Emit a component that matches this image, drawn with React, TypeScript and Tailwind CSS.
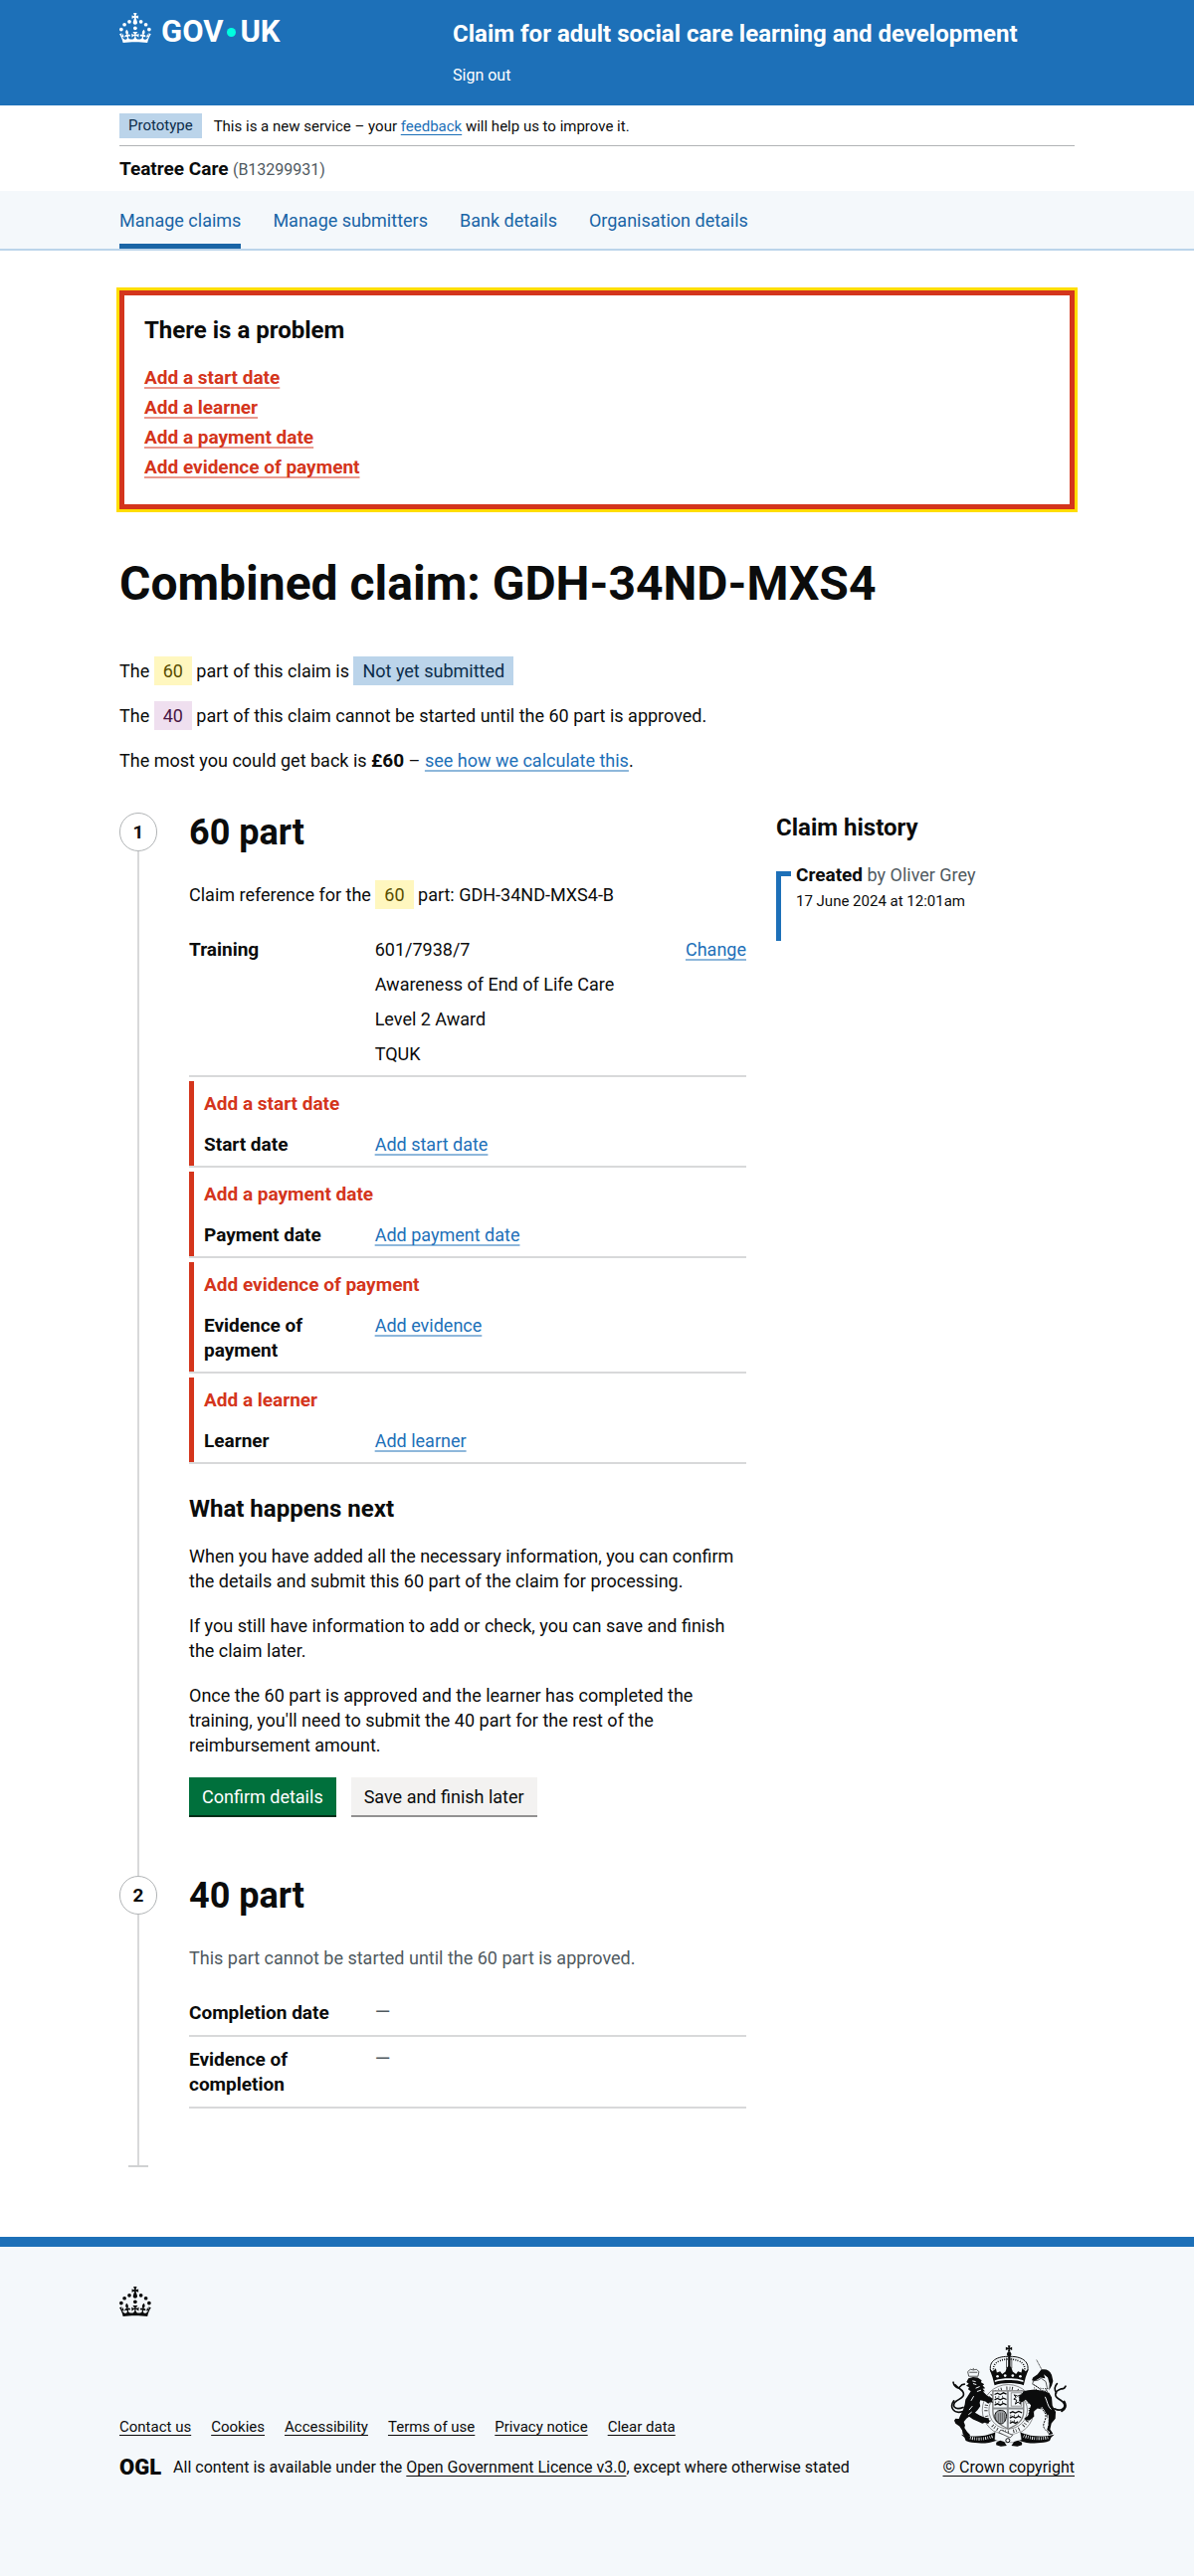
import React from "react";

const BOLD = "text-[19px] font-bold";
const INLINE_BOLD = "text-[19px] leading-none font-bold";
const LINK =
  "text-[#1d70b8] underline decoration-2 decoration-[#8eb7db] underline-offset-[3px] [text-decoration-skip-ink:none]";

function Crown() {
  return (
    <svg viewBox="0 0 64 60" className="h-[30px] w-8 shrink-0" fill="currentColor" aria-hidden="true">
      <circle cx="20" cy="17.6" r="3.7" />
      <circle cx="10.2" cy="23.5" r="3.7" />
      <circle cx="3.7" cy="33.2" r="3.7" />
      <circle cx="31.7" cy="30.6" r="3.7" />
      <circle cx="43.3" cy="17.6" r="3.7" />
      <circle cx="53.2" cy="23.5" r="3.7" />
      <circle cx="59.7" cy="33.2" r="3.7" />
      <path d="M33.1,9.8c.2-.1.3-.3.5-.5l4.6,2.4v-6.8l-4.6,1.5c-.1-.2-.3-.3-.5-.5l1.9-5.9h-6.7l1.9,5.9c-.2.1-.3.3-.5.5l-4.6-1.5v6.8l4.6-2.4c.1.2.3.3.5.5l-2.6,8c-.9,2.8,1.2,5.7,4.1,5.7h0c3,0,5.1-2.9,4.1-5.7l-2.6-8ZM37,37.9s-3.4,3.8-4.1,6.1c2.2,0,4.2-.5,6.4-2.8l-.7,8.5c-2-2.8-4.4-4.1-5.7-3.8.1,3.1.5,6.7,5.8,7.2,3.7.3,6.7-1.5,7-3.8.4-2.6-2-4.3-3.7-1.6-1.4-4.5,2.4-6.1,4.9-3.2-1.9-4.5-1.8-7.7,2.4-10.9,3,4,2.6,7.3-1.2,11.1,2.4-1.3,6.2,0,4,4.6-1.2-2.8-3.7-2.2-4.2.2-.3,1.7.7,3.7,3,4.2,1.9.3,4.7-.9,7-5.9-1.3,0-2.4.7-3.9,1.7l2.4-8c.6,2.3,1.4,3.7,2.2,4.5.6-1.6.5-2.8,0-5.3l5,1.8c-2.6,3.6-5.2,8.7-7.3,17.5-7.4-1.1-15.7-1.7-24.5-1.7h0c-8.8,0-17.1.6-24.5,1.7-2.1-8.9-4.7-13.9-7.3-17.5l5-1.8c-.5,2.5-.6,3.7,0,5.3.8-.8,1.6-2.3,2.2-4.5l2.4,8c-1.5-1-2.6-1.7-3.9-1.7,2.3,5,5.2,6.2,7,5.9,2.3-.4,3.3-2.4,3-4.2-.5-2.4-3-3.1-4.2-.2-2.2-4.6,1.6-6,4-4.6-3.7-3.7-4.2-7.1-1.2-11.1,4.2,3.2,4.3,6.4,2.4,10.9,2.5-2.8,6.3-1.3,4.9,3.2-1.8-2.7-4.1-1-3.7,1.6.3,2.3,3.3,4.1,7,3.8,5.4-.5,5.7-4.2,5.8-7.2-1.3-.2-3.7,1-5.7,3.8l-.7-8.5c2.2,2.3,4.2,2.7,6.4,2.8-.7-2.3-4.1-6.1-4.1-6.1h10.6,0Z" />
    </svg>
  );
}

function RoyalArms() {
  return (
    <svg viewBox="80 52 350 307" className="h-[102px] w-[117px]" aria-hidden="true" fill="#0b0c0c">
      {/* cross, orb and crown */}
      <path d="M253 53h8l-2 7 7-3v10l-7-3 2 8h-8l2-8-8 3V57l8 3z" />
      <circle cx="257" cy="79" r="7" />
      <path d="M254 84h7v34h-7z" />
      <g fill="none" stroke="#0b0c0c">
        <path d="M202 132c-8-26 10-46 52-46M312 132c8-26-10-46-52-46" strokeWidth="3" />
        <path d="M211 132c-6-20 8-36 42-38M303 132c6-20-8-36-42-38" strokeWidth="5" strokeDasharray="3 4" />
        <path d="M249 90v32M265 90v32" strokeWidth="2" />
      </g>
      <path d="M198 124l10 7 9-9 3 13 10-4 6 8 10-7 4-12 7-7 7 7 4 12 10 7 6-8 10 4 3-13 9 9 10-7-9 25-6 24c-22-9-66-9-88 0l-6-24z" />
      <g fill="#f4f8fb">
        <circle cx="222" cy="146" r="4" />
        <circle cx="245" cy="144" r="4" />
        <circle cx="268" cy="144" r="4" />
        <circle cx="291" cy="146" r="4" />
        <path d="M214 158c25-8 61-8 86 0v5c-25-8-61-8-86 0z" />
      </g>
      {/* garter */}
      <ellipse cx="254" cy="248" rx="78" ry="77" fill="#f4f8fb" stroke="#555" strokeWidth="2" />
      <ellipse cx="254" cy="248" rx="67" ry="66" fill="none" stroke="#333" strokeWidth="10" strokeDasharray="3 7 2 5 3 14" />
      <ellipse cx="254" cy="248" rx="58" ry="57" fill="#f4f8fb" stroke="#555" strokeWidth="2" />
      {/* quartered shield */}
      <path d="M208 190h93v62c0 30-22 42-46 53-24-11-47-23-47-53z" fill="#f4f8fb" stroke="#777" strokeWidth="4" />
      <path d="M253 190v112M208 243h93" stroke="#8a8d90" strokeWidth="6" />
      <g fill="none" stroke="#0b0c0c" strokeWidth="4">
        <path d="M213 201l9-4 8 4 10-5 9 4M213 217l9-4 8 4 10-5 9 4M213 233l9-4 8 4 10-5 9 4" />
        <path d="M216 206v6M226 205v6M237 205v6M216 222v6M226 221v6M237 221v6" strokeWidth="2" />
        <path d="M259 257l9-4 8 4 10-5 10 4M259 272l9-4 8 4 10-5 7 4M259 288l9-4 8 4 8-5" />
        <path d="M262 262v6M273 262v6M285 262v6M262 278v6M273 278v6" strokeWidth="2" />
        <path d="M272 202l6 8-7 5 9 3-4 12 8-6 8 6-3-12 6-4-8-3 5-9-9 4z" strokeWidth="3" />
        <rect x="263" y="196" width="32" height="40" strokeWidth="2" stroke="#666" />
      </g>
      <path d="M217 256c4-8 20-10 28-2l4 8c0 16-6 26-16 28-12-2-20-14-19-27z" fill="#9a9da0" stroke="#0b0c0c" strokeWidth="3" />
      <path d="M225 258v26M231 256v30M237 256v30M243 258v26" stroke="#0b0c0c" strokeWidth="1" />
      {/* lion */}
      <g fill="none" stroke="#0b0c0c" strokeWidth="2">
        <path d="M135 146l-3-14 8-7 9 2 9-2 8 7-3 14zM149 126v-5M137 134h24" />
      </g>
      <path d="M134 152l14-4 14 2 12 8-2 6 10 6-5 4 8 8-8 2 7 7-6 1 12 12 10 6 8 4-3 6 4 6-9-2-6 5-10-8-14-3-2 8 2 10-8 12-8 8 14 8 14 6 12 3 4 8-4 9-10-4-8 3-14-7-14-6-12-8-8 6-8 10 4 10-2 8 8 12 8 8 1 4-16 1-6-6-2-12-8-12-12-8-4-9 4-6 10 1 4-10 8-14 6-20 2-14 10-16 6-10-8-6 3-6-9-4 8-6-7-6z" />
      <path d="M146 160l10 2M148 168l10 3M156 182l12-5M160 192l12-4M134 262l10-8M128 298l6 8M150 206l-8 14M146 236l-10 12" stroke="#f4f8fb" strokeWidth="3" fill="none" />
      <path d="M118 240c-26 10-36-6-22-18 14-10 28-14 22-28-4-10-16-12-24-22M118 252c-30 10-42-14-28-32M104 182c-8-2-14-8-16-18M108 178c4-6 10-8 14-8" fill="none" stroke="#0b0c0c" strokeWidth="5" strokeLinecap="round" />
      {/* unicorn */}
      <path d="M340 96l18 34" stroke="#0b0c0c" strokeWidth="2" strokeDasharray="4 1" />
      <path d="M354 126c14-4 27 2 32 16l4 18-4 14-8 14 1-20-5-18-12-10 4 12-14-2-18 10-8-2 3-8 14-10z" />
      <path d="M330 160l14-2 10-6 14 10 4 18-4 12-14-4-14-12-12-6z" fill="#f4f8fb" stroke="#0b0c0c" strokeWidth="2" />
      <path d="M333 172c10 10 26 14 46 10M332 180c12 12 28 14 46 10" stroke="#0b0c0c" strokeWidth="3" strokeDasharray="3 4" fill="none" />
      <path d="M314 188l20-2 22 4 22 6 8 14 2 24 10 20-1 20-12 14-4 18 9 14-12 3-8-10 4-14 1-18-4-18-12-16-16-4-12 10 2 14-14 12-12 0-4-6 12-8 4-18 4-14-16-16-12 8-8-6 2-12 12-16z" />
      <path d="M354 240c6 12 16 16 14 30s-12 22-4 34 12 8 14 14" fill="none" stroke="#f4f8fb" strokeWidth="6" />
      <path d="M354 240c6 12 16 16 14 30s-12 22-4 34 12 8 14 14" fill="none" stroke="#0b0c0c" strokeWidth="3" strokeDasharray="6 3" />
      <path d="M366 208c6 12 8 30 18 38M374 262c4 12-2 22 0 34" fill="none" stroke="#f4f8fb" strokeWidth="3" />
      <path d="M394 244c24 12 38-6 26-20-12-12-26-12-22-28 4-10 16-12 26-14M400 196c-8-10-4-22 2-28M424 222c8 12 4 24-8 30M414 184c8 2 12-4 14-8" fill="none" stroke="#0b0c0c" strokeWidth="5" strokeLinecap="round" />
      {/* scroll */}
      <path d="M112 322c34 8 66 8 104-7l4 25c-30 12-60 9-84 5l-10-4-4-10z" />
      <path d="M394 322c-34 8-66 8-104-7l-4 25c30 12 60 9 84 5l10-4 4-10z" />
      <path d="M139 332c24 6 46 4 70-5M301 326c24 9 46 11 76 5" fill="none" stroke="#f4f8fb" strokeWidth="9" strokeDasharray="2 4 3 4 2 5" />
      <path d="M215 312c20 14 56 14 76 0l4 26-22 8h-40l-20-8z" fill="#f4f8fb" stroke="#0b0c0c" strokeWidth="1" />
      <path d="M232 308l36 16-8 8-34-16z" fill="#f4f8fb" stroke="#0b0c0c" strokeWidth="2" />
      <path d="M218 346l12-6 12 4 8 12-18 2-14-4zM296 346l-12-6-12 4-8 12 18 2 14-4z" />
      <circle cx="253" cy="340" r="6" fill="#f4f8fb" stroke="#0b0c0c" strokeWidth="3" />
    </svg>
  );
}

function Tag({ tone, children }: { tone: "yellow" | "purple" | "blue"; children: React.ReactNode }) {
  const tones = {
    yellow: "bg-[#fff7bf] text-[#594d00]",
    purple: "bg-[#efdfef] text-[#491644]",
    blue: "bg-[#bbd4ea] text-[#0c2d4a]",
  };
  return <strong className={`px-[9px] py-1 font-normal ${tones[tone]}`}>{children}</strong>;
}

const NAV = ["Manage claims", "Manage submitters", "Bank details", "Organisation details"];
const ERRORS = ["Add a start date", "Add a learner", "Add a payment date", "Add evidence of payment"];
const MISSING = [
  { error: "Add a start date", label: "Start date", action: "Add start date" },
  { error: "Add a payment date", label: "Payment date", action: "Add payment date" },
  { error: "Add evidence of payment", label: "Evidence of payment", action: "Add evidence" },
  { error: "Add a learner", label: "Learner", action: "Add learner" },
];
const FOOTER_LINKS = ["Contact us", "Cookies", "Accessibility", "Terms of use", "Privacy notice", "Clear data"];
const FOOT_LINK = "underline decoration-1 underline-offset-[3px] [text-decoration-skip-ink:none]";

function Step({ number, last, children }: { number: number; last?: boolean; children: React.ReactNode }) {
  return (
    <li className="flex">
      <div className="mr-8 flex w-[38px] shrink-0 flex-col items-center">
        <span
          className={`flex h-[39px] w-[38px] shrink-0 items-center justify-center rounded-full border border-[#b1b4b6] ${BOLD}`}
        >
          {number}
        </span>
        <span className="w-0.5 grow bg-[#d8d9da]" />
        {last && <span className="h-0.5 w-5 bg-[#d0d2d3]" />}
      </div>
      <div className="min-w-0 grow pb-[59px]">{children}</div>
    </li>
  );
}

export default function App() {
  return (
    <div className="bg-white font-['Roboto','Liberation_Sans',sans-serif] text-[18px] leading-[25px] text-[#0b0c0c]">
      <header>
        <div className="bg-[#1d70b8] px-4 pb-5 text-white">
          <div className="mx-auto flex max-w-[960px] flex-wrap">
            <a href="#home" aria-label="GOV.UK" className="flex w-[335px] items-start pt-[13px]">
              <Crown />
              <span className="mt-1 ml-2.5 flex items-center text-[31px] leading-[30px] font-bold">
                GOV
                <span className="mx-1 size-[9px] rounded-full bg-[#00ffe0]" />
                UK
              </span>
            </a>
            <div className="pt-[19px]">
              <a href="#service" className="block text-2xl leading-[30px] font-bold">
                Claim for adult social care learning and development
              </a>
              <a href="#sign-out" className="mt-[17px] block text-base leading-5">
                Sign out
              </a>
            </div>
          </div>
        </div>
        <div className="px-4">
          <div className="mx-auto max-w-[960px]">
            <div className="flex items-center border-b border-[#b1b4b6] pt-2 pb-[7px] text-[15px] leading-5">
              <strong className="bg-[#bbd4ea] px-[9px] pt-0.5 pb-[3px] font-normal text-[#0c2d4a]">Prototype</strong>
              <span className="ml-3">
                This is a new service – your{" "}
                <a
                  href="#feedback"
                  className="text-[#1d70b8] underline decoration-1 underline-offset-[3px] [text-decoration-skip-ink:none]"
                >
                  feedback
                </a>{" "}
                will help us to improve it.
              </span>
            </div>
            <p className="py-2.5">
              <span className={INLINE_BOLD}>Teatree Care</span>{" "}
              <span className="text-base leading-5 text-[#505a5f]">(B13299931)</span>
            </p>
          </div>
        </div>
        <nav aria-label="Account" className="border-b-2 border-[#bbd4ea] bg-[#f4f8fb] px-4">
          <ul className="mx-auto flex max-w-[960px] flex-wrap gap-x-8">
            {NAV.map((item, i) => (
              <li key={item}>
                <a
                  href="#nav"
                  aria-current={i === 0 ? "page" : undefined}
                  className={
                    "block border-b-[5px] pt-[17px] pb-[11px] text-[#1a65a6] " +
                    (i === 0 ? "border-[#1a65a6]" : "border-transparent")
                  }
                >
                  {item}
                </a>
              </li>
            ))}
          </ul>
        </nav>
      </header>

      <main className="px-4 pt-10 pb-[70px]">
        <div className="mx-auto max-w-[960px]">
          <section role="alert" className="border-[5px] border-[#d4351c] p-5 outline-3 outline-[#ffdd00]">
            <h2 className="mb-5 text-2xl leading-[30px] font-bold">There is a problem</h2>
            <ul>
              {ERRORS.map((error) => (
                <li key={error} className={`mb-[5px] ${BOLD}`}>
                  <a
                    href="#details"
                    className="text-[#d4351c] underline decoration-[#ea9a8e] decoration-2 underline-offset-[3px] [text-decoration-skip-ink:none]"
                  >
                    {error}
                  </a>
                </li>
              ))}
            </ul>
          </section>

          <h1 className="my-[50px] text-5xl leading-[50px] font-bold">Combined claim: GDH-34ND-MXS4</h1>

          <div className="space-y-5">
            <p>
              The <Tag tone="yellow">60</Tag> part of this claim is <Tag tone="blue">Not yet submitted</Tag>
            </p>
            <p>
              The <Tag tone="purple">40</Tag> part of this claim cannot be started until the 60 part is approved.
            </p>
            <p>
              The most you could get back is <strong className={INLINE_BOLD}>£60</strong> –{" "}
              <a href="#calculation" className={LINK}>
                see how we calculate this
              </a>
              .
            </p>
          </div>

          <div className="mt-10 grid gap-[30px] md:grid-cols-3">
            <ol className="md:col-span-2">
              <Step number={1}>
                <h2 className="mb-[30px] text-4xl leading-10 font-bold">60 part</h2>
                <p className="mb-5">
                  Claim reference for the <Tag tone="yellow">60</Tag> part: GDH-34ND-MXS4-B
                </p>
                <dl id="details">
                  <div className="mb-1 flex border-b-2 border-[#d8d9da] pt-2.5 pb-[9px]">
                    <dt className={`w-1/3 shrink-0 ${BOLD}`}>Training</dt>
                    <dd className="grow space-y-2.5">
                      <p>601/7938/7</p>
                      <p>Awareness of End of Life Care</p>
                      <p>Level 2 Award</p>
                      <p>TQUK</p>
                    </dd>
                    <dd>
                      <a href="#training" className={LINK}>
                        Change
                      </a>
                    </dd>
                  </div>
                  {MISSING.map((row) => (
                    <div key={row.label} className="mb-1 border-b-2 border-[#d8d9da] last:mb-0">
                      <div className="border-l-[5px] border-[#d4351c] pt-2.5 pb-[9px]">
                        <p className={`mb-4 pl-2.5 text-[#d4351c] ${BOLD}`}>{row.error}</p>
                        <div className="-ml-[5px] flex">
                          <dt className={`w-1/3 shrink-0 pr-10 pl-[15px] ${BOLD}`}>{row.label}</dt>
                          <dd>
                            <a href="#add" className={LINK}>
                              {row.action}
                            </a>
                          </dd>
                        </div>
                      </div>
                    </div>
                  ))}
                </dl>
                <h3 className="mt-[30px] mb-5 text-2xl leading-[30px] font-bold">What happens next</h3>
                <div className="space-y-5">
                  <p>
                    When you have added all the necessary information, you can confirm the details and submit this 60
                    part of the claim for processing.
                  </p>
                  <p>If you still have information to add or check, you can save and finish the claim later.</p>
                  <p>
                    Once the 60 part is approved and the learner has completed the training, you'll need to submit the
                    40 part for the rest of the reimbursement amount.
                  </p>
                </div>
                <div className="mt-5 flex flex-wrap gap-[15px]">
                  <button type="button" className="h-10 border-b-2 border-[#002d18] bg-[#00703c] px-[13px] text-white">
                    Confirm details
                  </button>
                  <button type="button" className="h-10 border-b-2 border-[#929191] bg-[#f3f2f1] px-[13px]">
                    Save and finish later
                  </button>
                </div>
              </Step>
              <Step number={2} last>
                <h2 className="mb-[30px] text-4xl leading-10 font-bold">40 part</h2>
                <p className="mb-5 text-[#505a5f]">This part cannot be started until the 60 part is approved.</p>
                <dl>
                  {["Completion date", "Evidence of completion"].map((label) => (
                    <div key={label} className="flex border-b-2 border-[#d8d9da] py-2.5">
                      <dt className={`w-1/3 shrink-0 pr-10 ${BOLD}`}>{label}</dt>
                      <dd className="text-xl leading-[25px] text-[#505a5f]">—</dd>
                    </div>
                  ))}
                </dl>
              </Step>
            </ol>

            <aside>
              <h2 className="mb-5 text-2xl leading-[30px] font-bold">Claim history</h2>
              <div className="flex">
                <span className="mt-[9px] mr-[5px] h-[70px] w-[15px] border-t-[5px] border-l-[5px] border-[#1d70b8]" />
                <div>
                  <p>
                    <strong className={INLINE_BOLD}>Created</strong>{" "}
                    <span className="text-[#505a5f]">by Oliver Grey</span>
                  </p>
                  <p className="mt-1 text-[15px] leading-5">
                    <time dateTime="2024-06-17T00:01">17 June 2024 at 12:01am</time>
                  </p>
                </div>
              </div>
            </aside>
          </div>
        </div>
      </main>

      <footer className="border-t-[10px] border-[#1d70b8] bg-[#f4f8fb] px-4 pt-10 pb-[99px] text-base leading-5">
        <div className="mx-auto max-w-[960px]">
          <Crown />
          <div className="mt-[29px] flex flex-wrap items-end justify-between gap-5">
            <div>
              <ul className="mb-[21px] flex flex-wrap gap-x-5 text-[15px]">
                {FOOTER_LINKS.map((item) => (
                  <li key={item}>
                    <a href="#footer" className={FOOT_LINK}>
                      {item}
                    </a>
                  </li>
                ))}
              </ul>
              <div className="flex items-center">
                <strong className="mr-3 text-[22px] leading-5 font-black">OGL</strong>
                <span>
                  All content is available under the{" "}
                  <a href="#licence" className={FOOT_LINK}>
                    Open Government Licence v3.0
                  </a>
                  , except where otherwise stated
                </span>
              </div>
            </div>
            <a href="#copyright" className="flex flex-col items-center gap-[11px]">
              <RoyalArms />
              <span className={FOOT_LINK}>© Crown copyright</span>
            </a>
          </div>
        </div>
      </footer>
    </div>
  );
}
